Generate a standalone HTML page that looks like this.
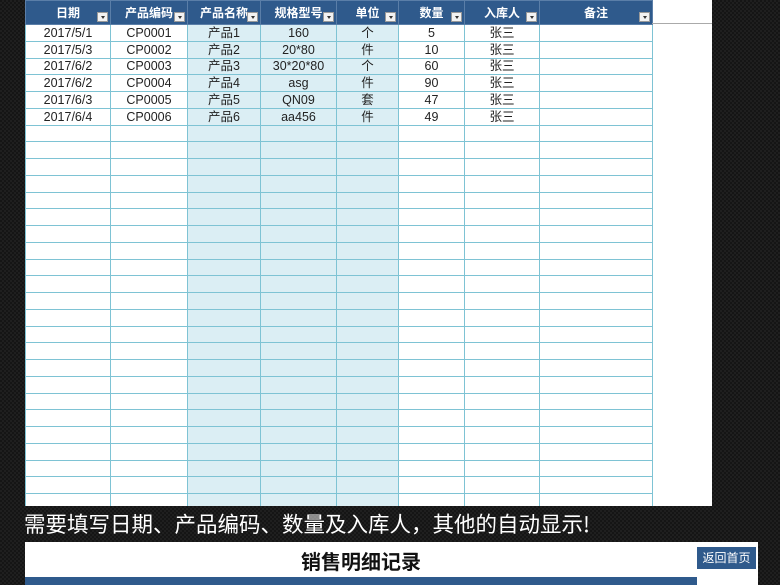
<!DOCTYPE html>
<html><head><meta charset="utf-8"><style>
body{margin:0;width:780px;height:585px;overflow:hidden;background:#151515;background-image:linear-gradient(45deg,#1f1f1f 25%,transparent 25%,transparent 75%,#1f1f1f 75%),linear-gradient(45deg,#1f1f1f 25%,transparent 25%,transparent 75%,#1f1f1f 75%);background-size:4px 4px;background-position:0 0,2px 2px;position:relative;font-family:"Liberation Sans","Noto Sans CJK SC",sans-serif}
.sheet{position:absolute;left:25px;top:0;width:687px;height:506px;background:#fff;overflow:hidden}
table{position:absolute;left:0;top:0;border-collapse:collapse;table-layout:fixed}
td,th{border:1px solid #7ec3d4;height:15.75px;padding:0;font-size:12.5px;text-align:center;color:#222;line-height:14px}
th{background:#2f5a8c;color:#fff;height:23px;font-size:12px;border-color:#5a7ea8;position:relative;font-weight:bold}
th i{position:absolute;right:2px;bottom:2px;width:11px;height:10px;background:#f2f2f2;border:1px solid #999;box-sizing:border-box}
th i:after{content:"";position:absolute;left:3px;top:3px;border:2.5px solid transparent;border-top:3px solid #333}
.b{background:#dbeef4}
.note{position:absolute;left:24px;top:509px;color:#fff;font-size:21.5px;line-height:30px;font-family:"Noto Sans CJK SC",sans-serif}
.panel{position:absolute;left:25px;top:542px;width:733px;height:43px;background:#fff}
.title{position:absolute;left:0;width:672px;top:4px;text-align:center;font-size:20px;font-weight:bold;color:#111;font-family:"Noto Sans CJK SC",sans-serif}
.btn{position:absolute;left:672px;top:5px;width:59px;height:22px;background:#2f5a8c;color:#fff;font-size:12px;line-height:22px;text-align:center;font-family:"Noto Sans CJK SC",sans-serif}
.bar{position:absolute;left:0;top:35px;width:672px;height:8px;background:#2f5a8c}
</style></head><body>
<div class="sheet">
<table>
<colgroup><col style="width:85px"><col style="width:77px"><col style="width:73px"><col style="width:76px"><col style="width:62px"><col style="width:66px"><col style="width:75px"><col style="width:113px"></colgroup>
<tr><th>日期<i></i></th><th>产品编码<i></i></th><th>产品名称<i></i></th><th>规格型号<i></i></th><th>单位<i></i></th><th>数量<i></i></th><th>入库人<i></i></th><th>备注<i></i></th></tr>
<tr><td>2017/5/1</td><td>CP0001</td><td class="b">产品1</td><td class="b">160</td><td class="b">个</td><td>5</td><td>张三</td><td></td></tr>
<tr><td>2017/5/3</td><td>CP0002</td><td class="b">产品2</td><td class="b">20*80</td><td class="b">件</td><td>10</td><td>张三</td><td></td></tr>
<tr><td>2017/6/2</td><td>CP0003</td><td class="b">产品3</td><td class="b">30*20*80</td><td class="b">个</td><td>60</td><td>张三</td><td></td></tr>
<tr><td>2017/6/2</td><td>CP0004</td><td class="b">产品4</td><td class="b">asg</td><td class="b">件</td><td>90</td><td>张三</td><td></td></tr>
<tr><td>2017/6/3</td><td>CP0005</td><td class="b">产品5</td><td class="b">QN09</td><td class="b">套</td><td>47</td><td>张三</td><td></td></tr>
<tr><td>2017/6/4</td><td>CP0006</td><td class="b">产品6</td><td class="b">aa456</td><td class="b">件</td><td>49</td><td>张三</td><td></td></tr>
<tbody id="e"></tbody>
</table>
<div style="position:absolute;left:627px;top:23px;width:60px;height:1px;background:#aaa"></div>
</div>
<div class="note">需要填写日期、产品编码、数量及入库人，其他的自动显示!</div>
<div class="panel"><div class="title">销售明细记录</div><div class="btn">返回首页</div><div class="bar"></div></div>
<script>
var h='';for(var i=0;i<24;i++)h+='<tr><td></td><td></td><td class="b"></td><td class="b"></td><td class="b"></td><td></td><td></td><td></td></tr>';document.getElementById('e').innerHTML=h;
</script>
</body></html>
